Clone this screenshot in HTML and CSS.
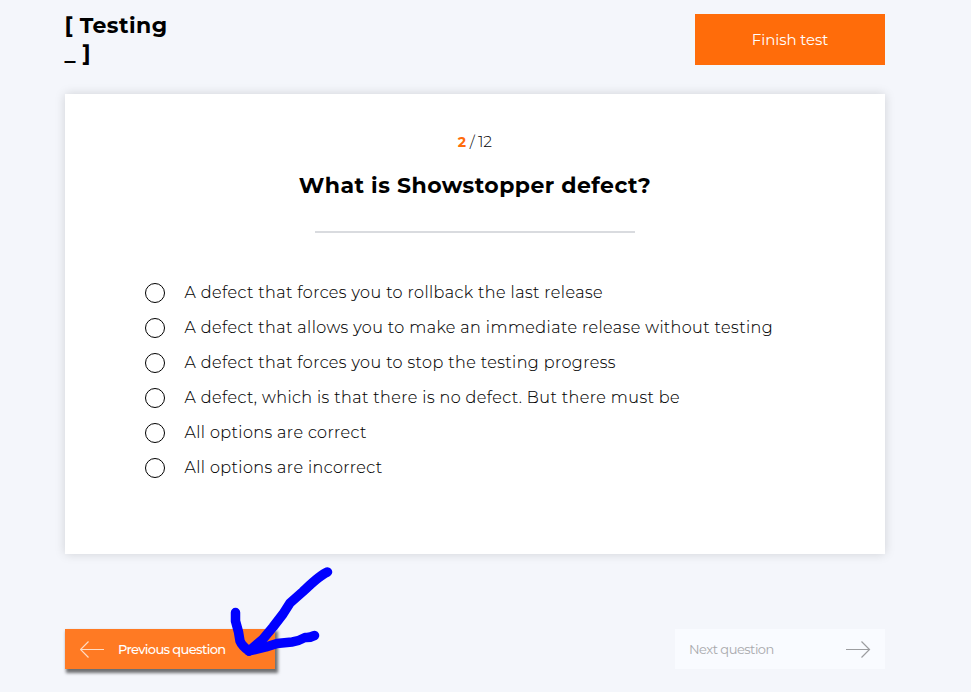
FILE: index.html
```html
<!DOCTYPE html>
<html lang="en">
<head>
<meta charset="utf-8">
<title>Testing</title>
<link rel="stylesheet" href="styles.css">
</head>
<body>
<div class="page">
  <header class="header">
    <div class="logo">[ Testing<br>_ ]</div>
    <button class="finish"><span>Finish test</span></button>
  </header>
  <main class="card">
    <div class="counter"><b>2</b><span>/ 12</span></div>
    <h1><span>What is Showstopper defect?</span></h1>
    <hr>
    <div class="options">
      <label class="option"><i class="radio"></i><span>A defect that forces you to rollback the last release</span></label>
      <label class="option"><i class="radio"></i><span>A defect that allows you to make an immediate release without testing</span></label>
      <label class="option"><i class="radio"></i><span>A defect that forces you to stop the testing progress</span></label>
      <label class="option"><i class="radio"></i><span>A defect, which is that there is no defect. But there must be</span></label>
      <label class="option"><i class="radio"></i><span>All options are correct</span></label>
      <label class="option"><i class="radio"></i><span>All options are incorrect</span></label>
    </div>
  </main>
  <nav class="nav">
    <button class="prev">
      <svg width="25" height="17" viewBox="0 0 25 17"><path d="M24 8.500H.5M8.500 .5L.5 8.500L8.500 16.500"/></svg>
      <span>Previous question</span>
    </button>
    <button class="next">
      <span>Next question</span>
      <svg width="25" height="17" viewBox="0 0 25 17"><path d="M0 8.500H24M15.500 .5L23.500 8.500L15.500 16.500"/></svg>
    </button>
  </nav>
</div>
<svg class="mark" width="110" height="100" viewBox="225 562 110 100">
  <path d="M327.500 572C320 575 312 583 303 591.500L290 603L283 614L273 627L263 639L249 651"/>
  <path d="M235.500 612.500V621L238.500 632L240 641Q242 646 249 651"/>
  <path d="M314.500 635.500Q310 638 305 637.500Q299 641 292 642L277 643.500L266 647L249 651"/>
</svg>
</body>
</html>
```

FILE: styles.css
```css
* { box-sizing: border-box; }
body {
  margin: 0;
  height: 692px;
  overflow: hidden;
  background: #f4f6fb;
  color: #000;
  font-family: Montserrat, Inter, sans-serif;
}
button { border: 0; padding: 0; font-family: inherit; }
.page { width: 820px; margin-left: 65px; padding-top: 14px; }
.header { display: flex; justify-content: space-between; height: 80px; }
.logo { margin: -2px 0 0 -.5px; font-size: 22px; line-height: 27.500px; font-weight: 700; letter-spacing: .44px; }
.finish { width: 190px; height: 51px; background: #ff6c0a; color: #fff; font-size: 15px; font-weight: 400; letter-spacing: -.1px; }
.card {
  height: 460px;
  padding: 38px 80px 0;
  background: #fff;
  box-shadow: 0 0 10px rgba(0, 0, 0, .15);
}
.counter { display: flex; justify-content: center; align-items: center; gap: 4px; height: 20px; margin-top: -.5px; font-size: 15.500px; font-weight: 300; letter-spacing: -.25px; }
.counter b { color: #ff6c0a; font-size: 14px; font-weight: 700; }
.counter span { margin-right: .5px; }
h1 { margin: 20.500px 0 0; text-align: center; font-size: 22px; line-height: 28px; font-weight: 700; letter-spacing: .44px; }
hr { width: 320px; height: 2px; margin: 31px auto 0; border: 0; background: #d9dbdf; }
.options { display: flex; flex-direction: column; margin-top: 42px; }
.option { display: flex; align-items: center; height: 35px; gap: 19.500px; font-size: 16px; font-weight: 300; white-space: nowrap; letter-spacing: .43px; -webkit-text-stroke: .1px #000; }
.radio { width: 20px; height: 20px; border: 1.500px solid #000; border-radius: 50%; }
.nav { display: flex; justify-content: space-between; align-items: flex-start; margin-top: 75px; }
.nav svg { fill: none; stroke: currentColor; stroke-width: 1.200; }
.prev, .next { display: flex; align-items: center; height: 40px; padding: 0 14px; font-size: 13px; }
.prev { width: 210px; padding-left: 15px; gap: 13px; background: #ff7a23; color: #fff; letter-spacing: -.64px; font-weight: 500; box-shadow: 2px 3px 3px 1px rgba(0, 0, 0, .55); }
.prev svg { color: #ffdcc4; }
.next { width: 210px; justify-content: space-between; background: #f9fbff; color: #a8a9ac; letter-spacing: -.5px; font-weight: 400; }
.next svg { color: #9c9da0; }
.mark { position: absolute; left: 225px; top: 562px; fill: none; stroke: #00f; stroke-width: 9.500; stroke-linecap: round; stroke-linejoin: round; }
```
